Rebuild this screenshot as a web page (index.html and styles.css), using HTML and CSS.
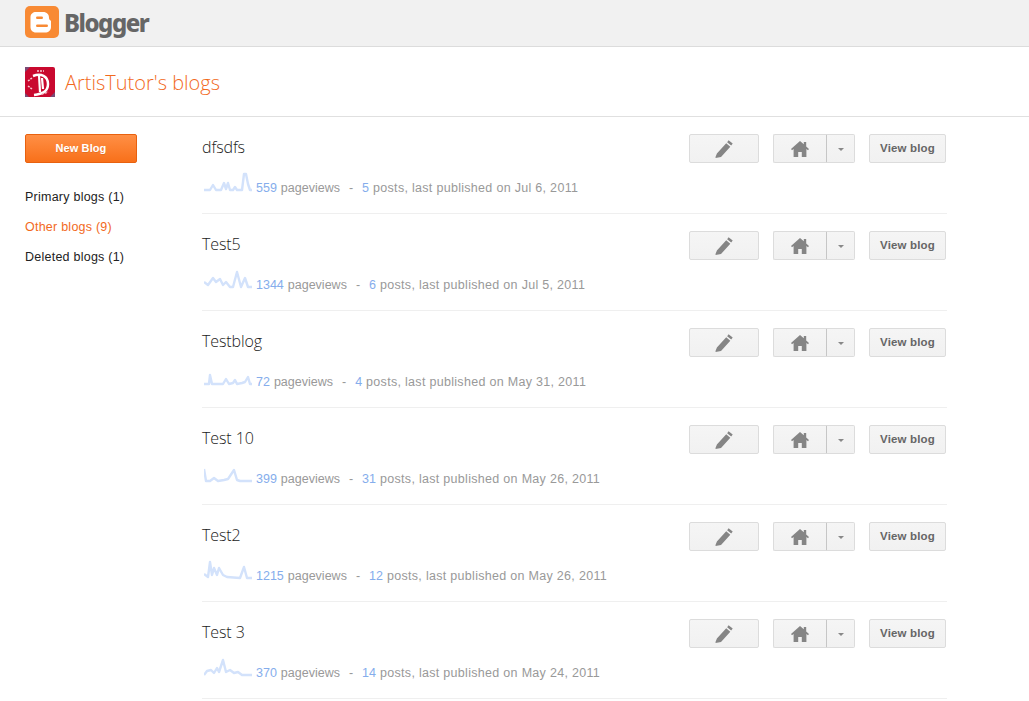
FILE: index.html
```html
<!DOCTYPE html>
<html lang="en">
<head>
<meta charset="utf-8">
<title>Blogger</title>
<link rel="stylesheet" href="styles.css">
</head>
<body>
<svg class="defs" width="0" height="0" aria-hidden="true">
  <symbol id="pencil" viewBox="0 0 18 18"><path d="M13.6 0.3 17.7 3.6 16.2 5.6 12.1 2.2ZM11.2 3.3 15.3 6.7 6 17 0.6 18 0.5 17 1.9 13.5Z"/></symbol>
  <symbol id="home" viewBox="0 0 18 16"><path d="M9 0 12.800 3.300V1H15.200V5.400L18 8 17 9.300 15.400 8V16H10.800V11H7.200V16H2.600V8L1 9.300 0 8Z"/></symbol>
</svg>
<header class="topbar">
  <svg class="logo" viewBox="0 0 34 32" width="34" height="32" aria-hidden="true">
    <rect width="34" height="32" rx="5" fill="#f88a34"/>
    <path d="M11 6h7c4 0 6 2.400 6 6 0 1.500 1 2 2 3v6c0 3.500-2.500 5.500-6 5.500h-9c-3.500 0-5.500-2.500-5.500-5.500v-10c0-3 2.500-5 5.500-5z" fill="#fff"/>
    <rect x="11" y="10.500" width="7" height="2.500" rx="1.200" fill="#f88a34"/>
    <rect x="11" y="18.500" width="12" height="2.500" rx="1.200" fill="#f88a34"/>
  </svg>
  <span class="brand">Blogger</span>
</header>
<section class="titlebar">
  <svg class="avatar" viewBox="0 0 30 30" width="30" height="30" aria-hidden="true">
    <rect width="30" height="30" rx="2" fill="#c9092f"/>
    <path d="M0 0h5L0 5ZM30 30h-5l5-5ZM0 30v-4l4 4Z" fill="#7b4a75"/>
    <path d="M8 9c8-3 15 0 15 8s-6 10-14 11" fill="none" stroke="#fff" stroke-width="2.500"/>
    <path d="M14 8 15 25M17 11 18 22" fill="none" stroke="#fff" stroke-width="2.200"/>
    <path d="M12 4h7M3 14l4-3M3 19l4 3M17 27l6-2" stroke="#f6c6cf" stroke-width="1.500" stroke-dasharray="2 1"/>
  </svg>
  <h1 class="title">ArtisTutor's blogs</h1>
</section>
<div class="layout">
  <aside class="sidebar">
    <button class="new-blog" type="button">New Blog</button>
    <nav class="side-nav">
      <a class="side-link">Primary blogs (1)</a>
      <a class="side-link active">Other blogs (9)</a>
      <a class="side-link">Deleted blogs (1)</a>
    </nav>
  </aside>
  <main class="blogs">
    <article class="blog">
      <div class="blog-head">
        <h2 class="blog-name">dfsdfs</h2>
        <div class="actions">
          <button class="btn edit" type="button"><svg class="ico pen"><use href="#pencil"/></svg></button>
          <div class="split"><button class="btn home" type="button"><svg class="ico house"><use href="#home"/></svg></button><button class="btn caret" type="button"><i class="arrow"></i></button></div>
          <button class="btn view" type="button">View blog</button>
        </div>
      </div>
      <p class="stats"><svg class="spark" viewBox="0 0 48 20"><polyline points="0,18 6,18 9,13 12,18 17,18 20,11 22,17 24,11 26,18 29,18 31,15 33,18 38,18 40,2 42,2 44,12 46,18 48,18"/></svg><b>559</b><span>pageviews</span><span class="dash">-</span><b>5</b><span class="meta">posts, last published on Jul 6, 2011</span></p>
    </article>
    <article class="blog">
      <div class="blog-head">
        <h2 class="blog-name">Test5</h2>
        <div class="actions">
          <button class="btn edit" type="button"><svg class="ico pen"><use href="#pencil"/></svg></button>
          <div class="split"><button class="btn home" type="button"><svg class="ico house"><use href="#home"/></svg></button><button class="btn caret" type="button"><i class="arrow"></i></button></div>
          <button class="btn view" type="button">View blog</button>
        </div>
      </div>
      <p class="stats"><svg class="spark" viewBox="0 0 48 20"><polyline points="0,13 4,16 9,9 12,13 16,10 19,16 22,13 26,18 29,18 33,3 37,18 41,9 44,18 48,18"/></svg><b>1344</b><span>pageviews</span><span class="dash">-</span><b>6</b><span class="meta">posts, last published on Jul 5, 2011</span></p>
    </article>
    <article class="blog">
      <div class="blog-head">
        <h2 class="blog-name">Testblog</h2>
        <div class="actions">
          <button class="btn edit" type="button"><svg class="ico pen"><use href="#pencil"/></svg></button>
          <div class="split"><button class="btn home" type="button"><svg class="ico house"><use href="#home"/></svg></button><button class="btn caret" type="button"><i class="arrow"></i></button></div>
          <button class="btn view" type="button">View blog</button>
        </div>
      </div>
      <p class="stats"><svg class="spark" viewBox="0 0 48 20"><polyline points="0,18 5,18 6,9 8,18 19,18 22,13 25,18 29,17 31,14 33,18 38,17 41,16 44,11 46,18 48,18"/></svg><b>72</b><span>pageviews</span><span class="dash">-</span><b>4</b><span class="meta">posts, last published on May 31, 2011</span></p>
    </article>
    <article class="blog">
      <div class="blog-head">
        <h2 class="blog-name">Test 10</h2>
        <div class="actions">
          <button class="btn edit" type="button"><svg class="ico pen"><use href="#pencil"/></svg></button>
          <div class="split"><button class="btn home" type="button"><svg class="ico house"><use href="#home"/></svg></button><button class="btn caret" type="button"><i class="arrow"></i></button></div>
          <button class="btn view" type="button">View blog</button>
        </div>
      </div>
      <p class="stats"><svg class="spark" viewBox="0 0 48 20"><polyline points="0,6 2,18 6,18 10,15 14,18 20,17 24,16 30,7 33,17 36,18 48,18"/></svg><b>399</b><span>pageviews</span><span class="dash">-</span><b>31</b><span class="meta">posts, last published on May 26, 2011</span></p>
    </article>
    <article class="blog">
      <div class="blog-head">
        <h2 class="blog-name">Test2</h2>
        <div class="actions">
          <button class="btn edit" type="button"><svg class="ico pen"><use href="#pencil"/></svg></button>
          <div class="split"><button class="btn home" type="button"><svg class="ico house"><use href="#home"/></svg></button><button class="btn caret" type="button"><i class="arrow"></i></button></div>
          <button class="btn view" type="button">View blog</button>
        </div>
      </div>
      <p class="stats"><svg class="spark" viewBox="0 0 48 20"><polyline points="0,14 4,17 6,2 8,15 10,8 13,15 15,8 19,15 23,17 36,18 40,7 43,18 48,18"/></svg><b>1215</b><span>pageviews</span><span class="dash">-</span><b>12</b><span class="meta">posts, last published on May 26, 2011</span></p>
    </article>
    <article class="blog">
      <div class="blog-head">
        <h2 class="blog-name">Test 3</h2>
        <div class="actions">
          <button class="btn edit" type="button"><svg class="ico pen"><use href="#pencil"/></svg></button>
          <div class="split"><button class="btn home" type="button"><svg class="ico house"><use href="#home"/></svg></button><button class="btn caret" type="button"><i class="arrow"></i></button></div>
          <button class="btn view" type="button">View blog</button>
        </div>
      </div>
      <p class="stats"><svg class="spark" viewBox="0 0 48 20"><polyline points="0,18 3,14 7,13 10,16 13,11 15,15 19,3 22,15 26,13 30,16 34,15 38,18 48,18"/></svg><b>370</b><span>pageviews</span><span class="dash">-</span><b>14</b><span class="meta">posts, last published on May 24, 2011</span></p>
    </article>
  </main>
</div>
</body>
</html>
```
FILE: styles.css
```css
* { box-sizing: border-box; }
html, body { margin: 0; padding: 0; background: #fff; }
body { font-family: "Liberation Sans", Arial, sans-serif; font-size: 12px; color: #222; }
.defs { display: block; height: 0; }
.topbar { height: 47px; background: #f1f1f1; border-bottom: 1px solid #dcdcdc; display: flex; align-items: flex-start; padding: 6px 0 0 25px; }
.logo { display: block; flex: none; }
.brand { margin-left: 5px; font-family: "Noto Sans", sans-serif; font-weight: 800; font-size: 24px; line-height: 34px; color: #666; letter-spacing: -1.5px; }
.titlebar { height: 70px; border-bottom: 1px solid #e0e0e0; display: flex; align-items: center; padding-left: 25px; }
.avatar { display: block; flex: none; }
.title { margin: 2px 0 0 10px; font-family: "Open Sans", sans-serif; font-weight: 300; font-size: 20px; line-height: 28px; color: #f26a1d; }
.layout { display: flex; padding: 17px 0 0 25px; }
.sidebar { width: 177px; flex: none; }
.new-blog { display: block; width: 112px; height: 29px; padding: 0 0 2px; border: 1px solid #e8610f; border-radius: 2px; background: linear-gradient(#ff8f45, #f8701a); color: #fff; font: bold 11px "Liberation Sans", Arial, sans-serif; letter-spacing: 0.1px; text-shadow: 0 1px 0 rgba(0,0,0,.1); }
.side-nav { display: flex; flex-direction: column; gap: 12px; margin-top: 25px; }
.side-link { font-size: 12.5px; line-height: 18px; color: #222; letter-spacing: 0.24px; }
.side-link.active { color: #f26a1d; }
.blogs { width: 745px; flex: none; }
.blog { height: 97px; border-bottom: 1px solid #efefef; }
.blog + .blog { padding-top: 17px; }
.blog:first-child { height: 80px; }
.blog-head { display: flex; justify-content: space-between; align-items: flex-start; padding-right: 1px; }
.blog-name { margin: 0; font-family: "Open Sans", sans-serif; font-weight: 300; font-size: 16px; line-height: 26px; letter-spacing: -0.1px; color: #222; }
.actions { display: flex; gap: 14px; }
.split { display: flex; }
.btn { display: flex; align-items: center; justify-content: center; height: 29px; padding: 0; border: 1px solid #dcdcdc; border-radius: 2px; background: linear-gradient(#f5f5f5, #f1f1f1); color: #666; font: bold 11px "Liberation Sans", Arial, sans-serif; }
.edit { width: 70px; }
.home { width: 54px; border-radius: 2px 0 0 2px; border-right-color: #c6c6c6; }
.caret { width: 28px; border-left: 0; border-radius: 0 2px 2px 0; }
.view { width: 77px; padding-bottom: 2px; font-size: 11.5px; letter-spacing: 0.15px; }
.ico { display: block; fill: #858585; }
.pen { width: 18px; height: 18px; }
.house { width: 18px; height: 16px; }
.arrow { display: block; width: 0; height: 0; border: 3px solid transparent; border-top: 3px solid #888; border-bottom: 0; margin-top: 1px; }
.stats { display: flex; align-items: center; margin: 15px 0 0; height: 20px; font-size: 12.5px; color: #999; white-space: nowrap; }
.stats b { font-weight: normal; color: #85adec; margin-right: 4px; }
.meta { letter-spacing: 0.3px; }
.dash { margin: 0 9px; }
.spark { display: block; width: 48px; height: 20px; margin: 0 4px 12px 2px; flex: none; }
.spark polyline { fill: none; stroke: #d3e2fb; stroke-width: 2.4; stroke-linejoin: round; }
```
